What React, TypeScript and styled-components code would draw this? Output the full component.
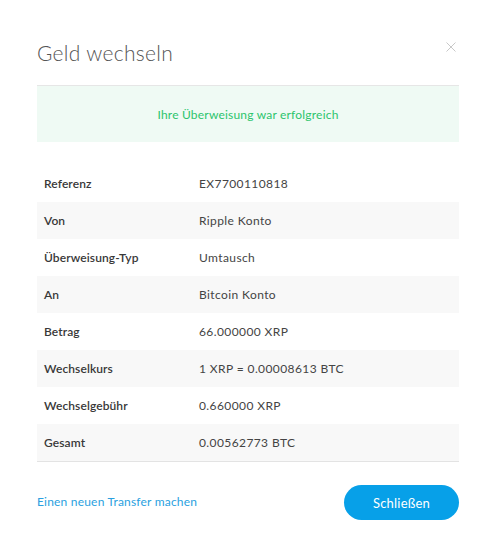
import React from "react";
import styled, { createGlobalStyle } from "styled-components";

const GlobalStyle = createGlobalStyle`
  html, body {
    margin: 0;
    padding: 0;
    background: #ffffff;
  }
  body {
    font-family: Lato, "Noto Sans", "Liberation Sans", sans-serif;
    -webkit-font-smoothing: antialiased;
  }
`;

const Modal = styled.div`
  width: 497px;
  height: 559px;
  box-sizing: border-box;
  padding: 39px 38px 0 37px;
  background: #fff;
`;

const Header = styled.div`
  display: flex;
  justify-content: space-between;
  align-items: flex-start;
  height: 46px;
  border-bottom: 1px solid #e6e6e6;
`;

const Title = styled.h2`
  margin: 0;
  font-size: 21px;
  font-weight: 300;
  color: #555;
  letter-spacing: 0.3px;
  line-height: 28px;
`;

const CloseButton = styled.button`
  background: none;
  border: none;
  padding: 0;
  margin: 3px 3px 0 0;
  width: 10px;
  height: 10px;
  cursor: pointer;
  display: flex;
`;

const Success = styled.div`
  height: 56px;
  display: flex;
  align-items: center;
  justify-content: center;
  background: #effaf4;
  color: #2cc46c;
  font-size: 12px;
  letter-spacing: 0.2px;
`;

const Table = styled.div`
  margin-top: 23px;
  border-bottom: 1px solid #e3e3e3;
`;

const Row = styled.div<{ $striped: boolean }>`
  display: grid;
  grid-template-columns: 155px 1fr;
  align-items: center;
  height: 37px;
  padding: 0 7px;
  background: ${({ $striped }) => ($striped ? "#f8f8f8" : "#fff")};
  font-size: 12px;
`;

const Label = styled.span`
  font-weight: 600;
  color: #383838;
  letter-spacing: 0.1px;
`;

const Value = styled.span`
  color: #444;
  letter-spacing: 0.4px;
`;

const Footer = styled.div`
  display: flex;
  justify-content: space-between;
  align-items: center;
  margin-top: 23px;
`;

const Link = styled.a`
  color: #2a9fe0;
  font-size: 12px;
  letter-spacing: 0.2px;
  text-decoration: none;
  cursor: pointer;
  margin-top: -3px;
`;

const PrimaryButton = styled.button`
  width: 115px;
  height: 35px;
  border: none;
  border-radius: 18px;
  background: #07a0e8;
  color: #fff;
  font-family: inherit;
  font-size: 13px;
  letter-spacing: 0.2px;
  cursor: pointer;
`;

const rows: [string, string][] = [
  ["Referenz", "EX7700110818"],
  ["Von", "Ripple Konto"],
  ["Überweisung-Typ", "Umtausch"],
  ["An", "Bitcoin Konto"],
  ["Betrag", "66.000000 XRP"],
  ["Wechselkurs", "1 XRP = 0.00008613 BTC"],
  ["Wechselgebühr", "0.660000 XRP"],
  ["Gesamt", "0.00562773 BTC"],
];

const App: React.FC = () => {
  return (
    <>
      <GlobalStyle />
      <Modal>
        <Header>
          <Title>Geld wechseln</Title>
          <CloseButton aria-label="Schließen">
            <svg width="10" height="10" viewBox="0 0 10 10">
              <path d="M0.5 0.5L9.5 9.5M9.5 0.5L0.5 9.5" stroke="#c8c8c8" strokeWidth="1" />
            </svg>
          </CloseButton>
        </Header>
        <Success>Ihre Überweisung war erfolgreich</Success>
        <Table>
          {rows.map(([label, value], i) => (
            <Row key={label} $striped={i % 2 === 1}>
              <Label>{label}</Label>
              <Value>{value}</Value>
            </Row>
          ))}
        </Table>
        <Footer>
          <Link>Einen neuen Transfer machen</Link>
          <PrimaryButton>Schließen</PrimaryButton>
        </Footer>
      </Modal>
    </>
  );
};

export default App;
